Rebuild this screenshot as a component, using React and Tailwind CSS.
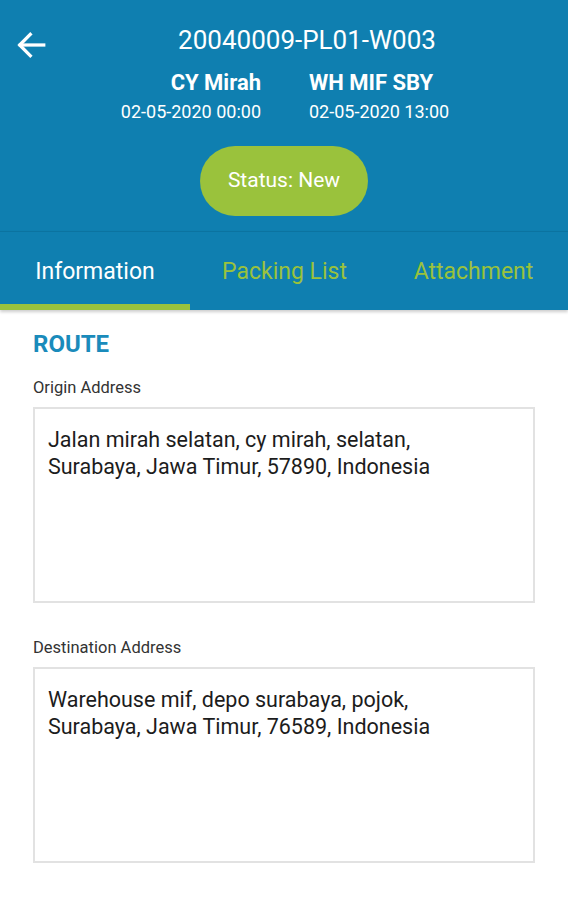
import React from 'react';

const AddressField = ({ label, lines, className }) => (
    <div className={className}>
        <div className="text-[16.5px] leading-[18px] text-[#333]">{label}</div>
        <div className="mt-[10px] h-[196px] border-2 border-[#e2e2e2] px-[13px] pt-[17px]">
            {lines.map((l) => (
                <div key={l} className="text-[21.5px] leading-[27px] text-[#1c1c1c] whitespace-nowrap">{l}</div>
            ))}
        </div>
    </div>
);

const App = () => {
    return (
        <div className="w-[568px] h-[900px] bg-white font-['Roboto',sans-serif]">
            {/* Header */}
            <div className="bg-[#0f7fb0] h-[231px] relative">
                <svg className="absolute left-[14px] top-[28px]" width="34" height="34" viewBox="0 0 24 24" fill="none" stroke="white" strokeWidth="2.3" strokeLinecap="square">
                    <path d="M21 12H4.5" />
                    <path d="M11.5 4.5L4 12l7.5 7.5" />
                </svg>
                <div className="pt-[24px] text-center pl-[46px] text-white text-[26px] leading-[32px]">
                    20040009-PL01-W003
                </div>
                <div className="flex justify-center gap-[48px] mt-[13px] pl-[2px] text-white">
                    <div className="text-right">
                        <div className="text-[22px] leading-[28px] font-bold">CY Mirah</div>
                        <div className="text-[18px] leading-[24px] mt-[3px]">02-05-2020 00:00</div>
                    </div>
                    <div className="text-left">
                        <div className="text-[22px] leading-[28px] font-bold">WH MIF SBY</div>
                        <div className="text-[18px] leading-[24px] mt-[3px]">02-05-2020 13:00</div>
                    </div>
                </div>
                <div className="flex justify-center mt-[22px]">
                    <div className="w-[168px] h-[70px] rounded-full bg-[#9ac23c] flex items-center justify-center text-white text-[21px]">
                        Status: New
                    </div>
                </div>
            </div>

            {/* Tabs */}
            <div className="bg-[#0f7fb0] border-t border-[#0b73a0] h-[79px] flex shadow-[0_2px_3px_rgba(0,0,0,0.2)] relative">
                <div className="w-[190px] flex flex-col">
                    <div className="flex-1 flex items-center justify-center pt-[8px] text-white text-[23px]">Information</div>
                    <div className="h-[6px] bg-[#9ac23c]" />
                </div>
                <div className="w-[189px] flex items-center justify-center pt-[2px] text-[#9ac23c] text-[23px]">Packing List</div>
                <div className="w-[189px] flex items-center justify-center pt-[2px] text-[#9ac23c] text-[23px]">Attachment</div>
            </div>

            {/* Content */}
            <div className="px-[33px] pt-[19px]">
                <div className="text-[24px] leading-[30px] font-bold text-[#1a8bbb]">ROUTE</div>
                <AddressField
                    className="mt-[20px]"
                    label="Origin Address"
                    lines={['Jalan mirah selatan, cy mirah, selatan,', 'Surabaya, Jawa Timur, 57890, Indonesia']}
                />
                <AddressField
                    className="mt-[36px]"
                    label="Destination Address"
                    lines={['Warehouse mif, depo surabaya, pojok,', 'Surabaya, Jawa Timur, 76589, Indonesia']}
                />
            </div>
        </div>
    );
};

export default App;
